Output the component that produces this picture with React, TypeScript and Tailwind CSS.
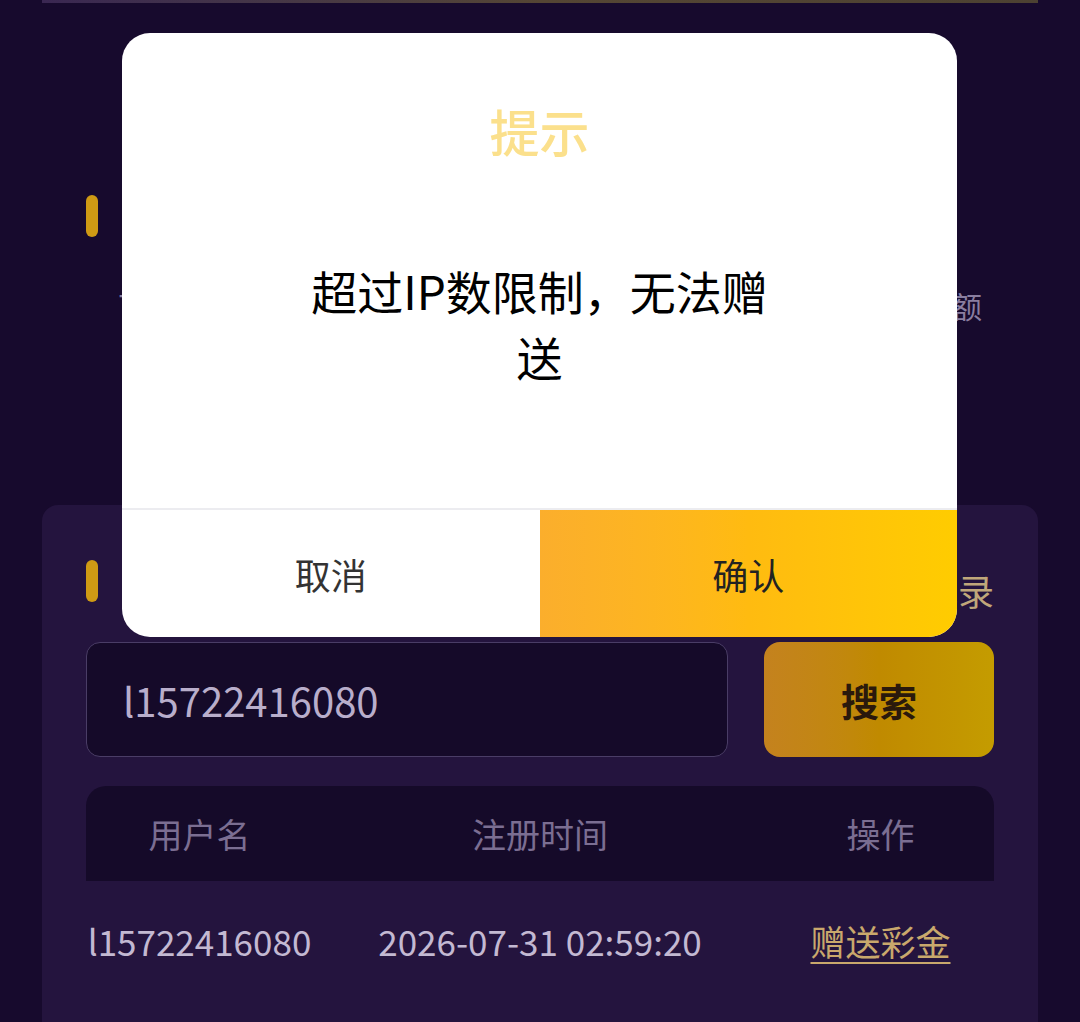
import { ReactNode } from 'react'

const font = { fontFamily: '"Noto Sans CJK SC", "Noto Sans", sans-serif' }

function Bar() {
  return <span className="block h-[42px] w-[12px] rounded-full bg-[#cf9a14]" />
}

function SectionTitle({ children }: { children: ReactNode }) {
  return (
    <div className="flex h-[42px] items-center gap-[28px]">
      <Bar />
      <span className="text-[36px] font-bold text-white">{children}</span>
    </div>
  )
}

function Modal() {
  return (
    <div className="absolute left-[122px] top-[33px] flex h-[604px] w-[835px] flex-col overflow-hidden rounded-[28px] bg-white">
      <div className="pt-[62px] text-center text-[50px] font-medium leading-[70px] text-[#fbe08c]">提示</div>
      <div className="mx-auto mt-[92px] w-[480px] text-center text-[46px] leading-[66px] text-black">
        超过IP数限制，无法赠送
      </div>
      <div className="mt-auto flex h-[129px] border-t-2 border-[#ececf0]">
        <button className="flex-1 text-[36px] text-[#333]">取消</button>
        <button className="flex-1 bg-gradient-to-r from-[#fbae2c] via-[#ffbb10] to-[#ffcc00] text-[36px] text-[#222]">
          确认
        </button>
      </div>
    </div>
  )
}

export default function App() {
  return (
    <div className="relative h-[1022px] w-full overflow-hidden bg-[#170a2d]" style={font}>
      <div className="mx-[42px] h-[3px] bg-gradient-to-r from-[#3a2752] via-[#554634] to-[#4d4232]" />

      <section className="mx-[42px] h-[502px] pt-[192px] pl-[44px]">
        <SectionTitle>赠送彩金</SectionTitle>
        <div className="mt-[48px] flex justify-between pl-[32px] pr-[56px] text-[30px] leading-[40px] text-[#8a7ea0]">
          <span>可赠送次数</span>
          <span>可用余额</span>
        </div>
      </section>

      <section className="mx-[42px] rounded-[16px] bg-[#24143e] px-[44px] pt-[55px] pb-[40px]">
        <div className="flex h-[42px] items-center justify-between">
          <SectionTitle>赠送用户</SectionTitle>
          <a className="h-[42px] text-[36px] leading-[60px] text-[#c0a77a]">赠送记录</a>
        </div>

        <div className="mt-[40px] flex gap-[36px]">
          <div className="flex h-[115px] flex-1 items-center rounded-[14px] border border-[#4a3d66] bg-[#150a29] px-[36px] text-[40px] text-[#b9aecb]">
            l15722416080
          </div>
          <button className="h-[115px] w-[230px] rounded-[16px] bg-gradient-to-r from-[#c4821e] via-[#c08a00] to-[#c49c00] text-[38px] font-bold text-[#2a190c]">
            搜索
          </button>
        </div>

        <div className="mt-[29px]">
          <div className="grid h-[95px] grid-cols-[1fr_2fr_1fr] items-center rounded-t-[20px] bg-[#150a29] text-center text-[34px] text-[#7b6e92]">
            <span>用户名</span>
            <span>注册时间</span>
            <span>操作</span>
          </div>
          <div className="grid h-[120px] grid-cols-[1fr_2fr_1fr] items-center text-center text-[35px] text-[#c3b9d2]">
            <span>l15722416080</span>
            <span>2026-07-31 02:59:20</span>
            <a className="text-[#c9a86c] underline decoration-2 underline-offset-[6px]">赠送彩金</a>
          </div>
        </div>
      </section>

      <Modal />
    </div>
  )
}
